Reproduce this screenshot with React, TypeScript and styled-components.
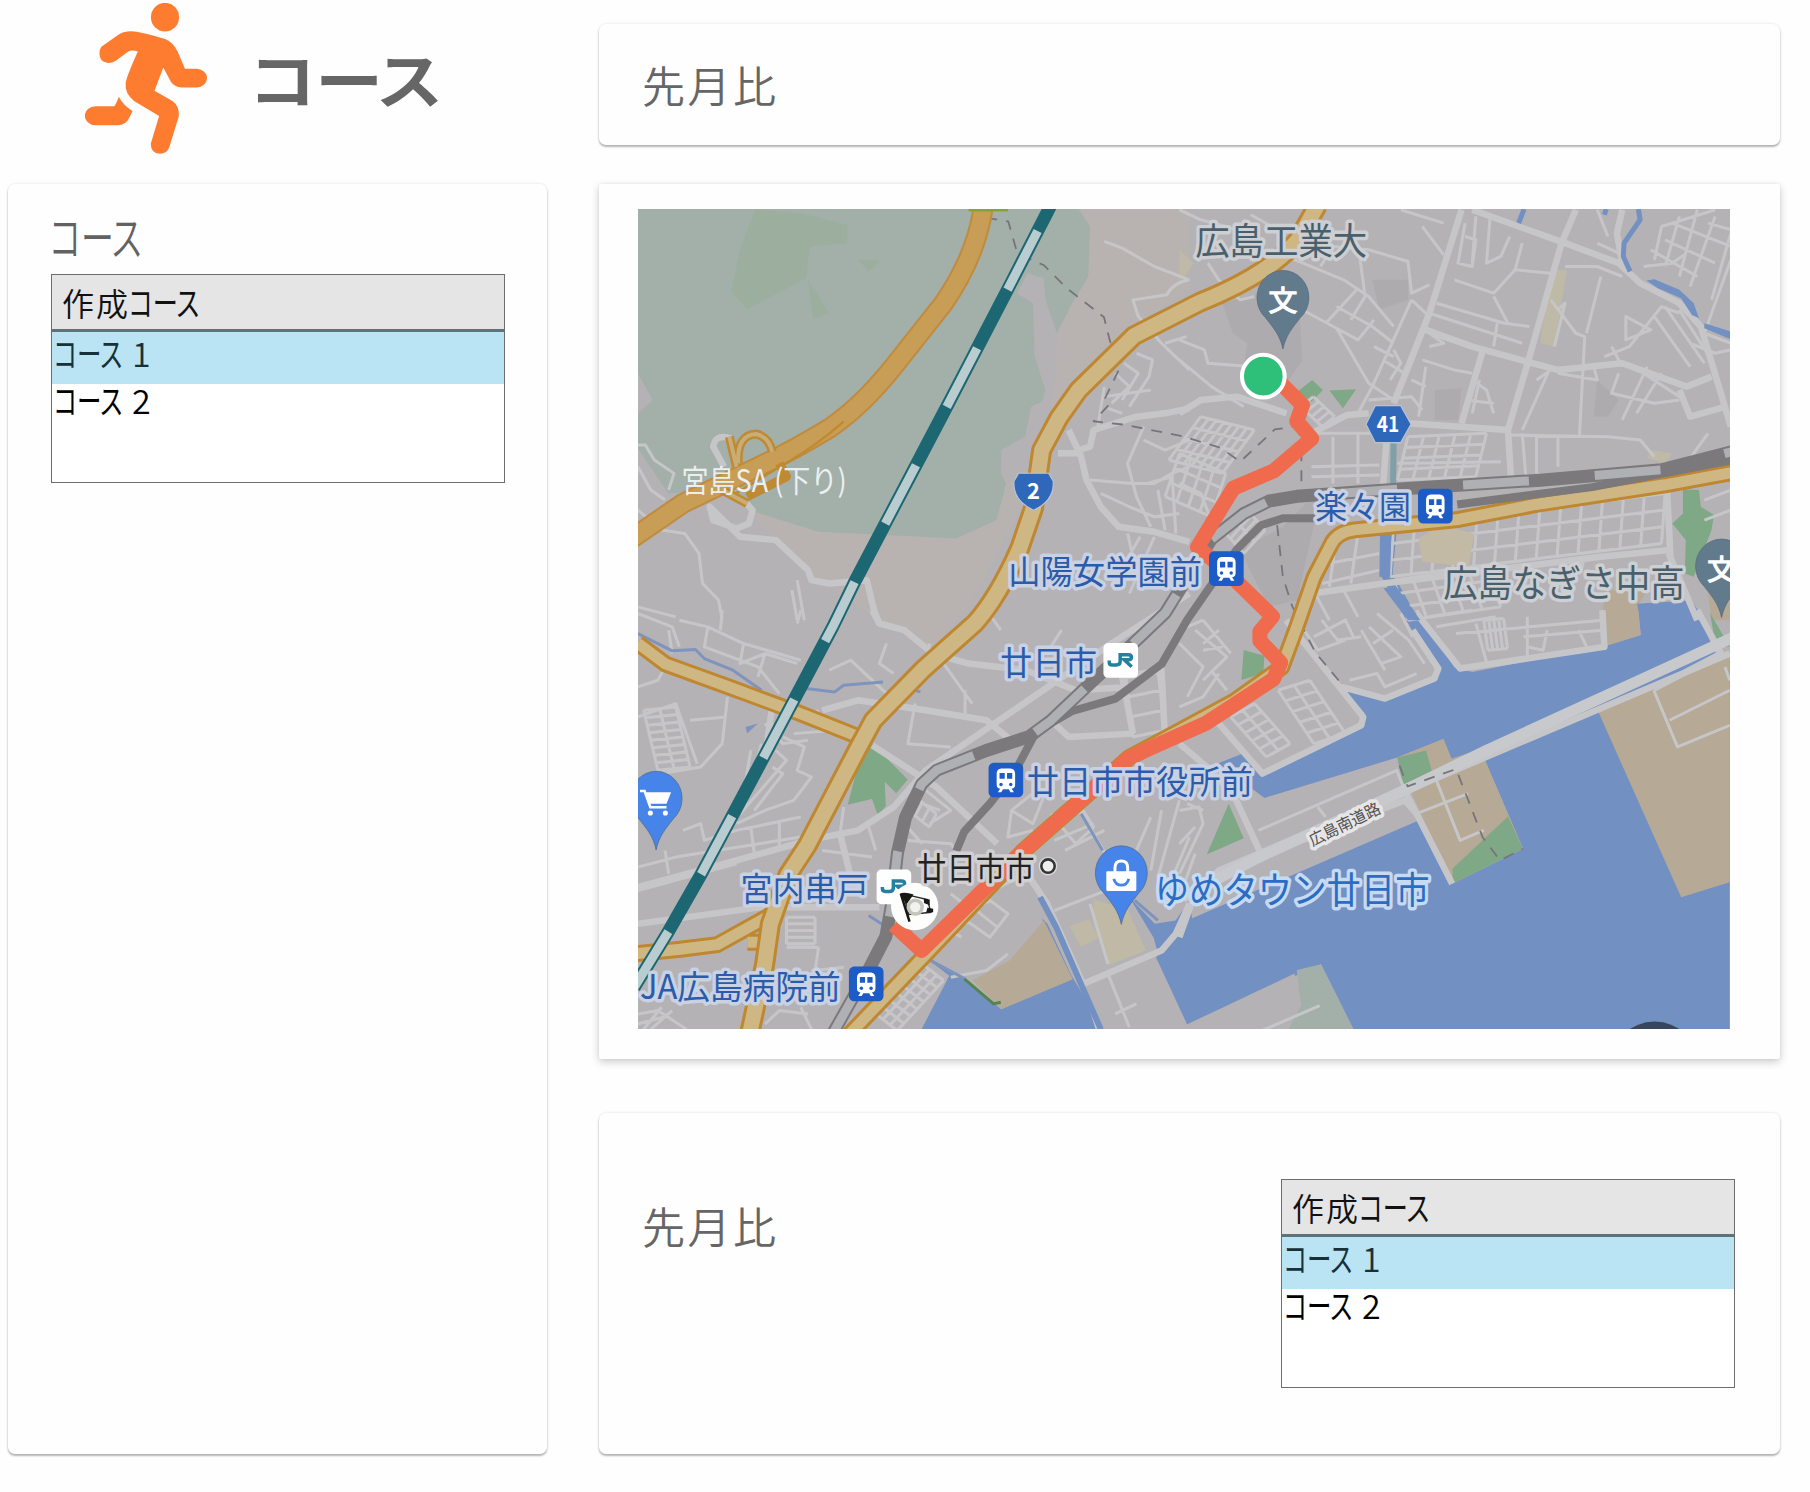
import React from "react";
import styled, { createGlobalStyle } from "styled-components";

const GlobalStyle = createGlobalStyle`
  *, *::before, *::after { box-sizing: border-box; }
  body {
    margin: 0;
    background: #fefefe;
    font-family: "Noto Sans CJK JP", "Noto Sans", sans-serif;
    font-weight: 350;
    color: #111;
  }
`;

/* ---------- page layout ---------- */

const Page = styled.main`
  display: grid;
  grid-template-columns: 539px 1181px;
  column-gap: 52px;
  width: 1810px;
  height: 1492px;
  padding: 0 0 38px 8px;
`;

const Column = styled.div`
  display: flex;
  flex-direction: column;
`;

const Brand = styled.header`
  display: flex;
  align-items: center;
  gap: 43px;
  height: 184px;
  padding: 0 0 28px 77px;
`;

const RunnerIcon = styled.svg`
  width: 122px;
  height: 151px;
  fill: #fd7c30;
`;

const Title = styled.h1`
  margin: 0 0 1px;
  font-size: 61px;
  font-weight: 700;
  line-height: 80px;
  color: #666;
`;

const Card = styled.section<{ $height: number; $top?: number; $lifted?: boolean }>`
  display: flex;
  align-items: center;
  justify-content: space-between;
  height: ${(p) => p.$height}px;
  margin-top: ${(p) => p.$top ?? 0}px;
  padding: 0 45px 0 43px;
  background: #fefefe;
  border-radius: ${(p) => (p.$lifted ? 2 : 7)}px;
  box-shadow: ${(p) =>
    p.$lifted
      ? "0 3px 9px rgba(0, 0, 0, 0.2), 0 0 3px rgba(0, 0, 0, 0.07)"
      : "0 2px 2px rgba(0, 0, 0, 0.27), 0 0 3px rgba(0, 0, 0, 0.12)"};
`;

const Sidebar = styled(Card)`
  flex-direction: column;
  align-items: flex-start;
  justify-content: flex-start;
  padding: 24px 43px;
`;

const Caption = styled.h2`
  margin: 0 0 0 -1px;
  height: 66px;
  font-size: 47px;
  font-weight: 350;
  line-height: 53px;
  color: #626262;
`;

const Metric = styled.p<{ $raise: number }>`
  margin: 0 0 ${(p) => p.$raise}px;
  font-size: 43px;
  line-height: 60px;
  letter-spacing: 2.5px;
  color: #666;
`;

const Kana = styled.span<{ $scale: number }>`
  display: inline-block;
  transform: scaleX(${(p) => p.$scale});
  transform-origin: left center;
  white-space: nowrap;
  font-feature-settings: "palt";
`;

/* ---------- list box ---------- */

const ListBox = styled.div`
  display: flex;
  flex-direction: column;
  flex: none;
  width: 454px;
  height: 209px;
  border: 1.5px solid #6d6d6d;
  background: #fff;
  font-size: 34px;
`;

const ListHead = styled.div`
  display: flex;
  height: 57px;
  padding-left: 10px;
  border-bottom: 3px solid #5f7278;
  background: #e5e5e5;
  line-height: 53px;
`;

const HeadKanji = styled.span`
  width: 67px;
  font-size: 32px;
  line-height: 55px;
  letter-spacing: 2px;
  white-space: nowrap;
`;

const ListRow = styled.div<{ $active?: boolean }>`
  display: flex;
  height: ${(p) => (p.$active ? 52 : 48)}px;
  padding-left: 2px;
  background: ${(p) => (p.$active ? "#bae4f3" : "transparent")};
  color: ${(p) => (p.$active ? "#17303a" : "#000")};
  line-height: ${(p) => (p.$active ? 42 : 32)}px;
`;

const KanaCell = styled.span`
  flex: none;
  width: 78px;
  font-weight: 400;
`;

const CourseList = () => (
  <ListBox>
    <ListHead>
      <HeadKanji>作成</HeadKanji>
      <KanaCell>
        <Kana $scale={0.74}>コース</Kana>
      </KanaCell>
    </ListHead>
    {[1, 2].map((n) => (
      <ListRow key={n} $active={n === 1}>
        <KanaCell>
          <Kana $scale={0.72}>コース</Kana>
        </KanaCell>
        {n}
      </ListRow>
    ))}
  </ListBox>
);

const Runner = () => (
  <RunnerIcon viewBox="221 9 321 452" preserveAspectRatio="none">
    <ellipse cx="431.500" cy="51.500" rx="37" ry="43" />
    <path d="M264 140L305 107Q322 92 350 94Q372 96 432 117Q453 127 465 155L484 206H514A28 28 0 0 1 514 262H475Q456 261 447 245L427 202L404 272L452 303Q470 318 468 347L443 440Q437 460 418 460Q394 458 394 430L416 347L350 302Q325 280 328 248Q330 230 360 154Q344 148 335 154L302 182Q292 190 279 188Q259 184 259 160Q259 148 264 140Z" />
    <path d="M310 290Q322 317 346 332L338 352Q328 375 308 375H249A28 28 0 0 1 249 318H298Q302 314 310 290Z" />
  </RunnerIcon>
);

/* ---------- map ---------- */

const MapCanvas = styled.svg`
  display: block;
  flex: none;
  width: 1092px;
  height: 820px;
  margin: -5px 0 0 -4px;
  font-family: "Noto Sans CJK JP", "Noto Sans", sans-serif;
  font-weight: 400;
`;

const Line = styled.path<{ $c: string; $w: number }>`
  fill: none;
  stroke: ${(p) => p.$c};
  stroke-width: ${(p) => p.$w}px;
  stroke-linejoin: round;
  vector-effect: non-scaling-stroke;
`;

const LAND = "#b5b2b6";
const WATER = "#7290c1";
const SAND = "#b6a995";
const PARK = "#7fa886";
const STREET = "#c6c6c9";

/* A block of streets: cols lines along v and rows lines along u. */
const blocks = (
  x: number, y: number,
  ux: number, uy: number,
  vx: number, vy: number,
  cols: number, rows: number
) => {
  let d = "";
  for (let i = 0; i <= cols; i++) {
    const t = i / cols;
    d += `M${x + ux * t} ${y + uy * t}l${vx} ${vy}`;
  }
  for (let j = 0; j <= rows; j++) {
    const t = j / rows;
    d += `M${x + vx * t} ${y + vy * t}l${ux} ${uy}`;
  }
  return d;
};

const NW = "matrix(.3094 0 0 .2888 545.8 173.3)";
const NE = "matrix(.3094 0 0 .2888 1022.3 173.3)";
const SW = "matrix(.3094 0 0 .2888 545.8 528.5)";
const SE = "matrix(.3425 0 0 .2888 1022.3 528.5)";

const JR_LINE =
  "M1502 391L1440 407L1335 416L1223 423L1124 430L1100 434L1078 445L1050 467L1010 531L988 552L948 589L911 624L892 638L855 650L812 667L799 679L785 708L778 739L773 783L768 811L753 840L722 895";
const SHINKANSEN = "M911 178L874 250L821 352L741 504L722 543L662 656L608 757L580 806L550 855";
const EXPRESSWAY = "M990 28Q970 170 880 310L740 500Q650 620 560 685Q460 750 390 785L150 910L0 1020";

const Streets = ({ sheet, wide, thin }: { sheet: string; wide: string; thin: string }) => (
  <g transform={sheet}>
    <Line $c={STREET} $w={3} d={thin} />
    <Line $c={STREET} $w={6.5} d={wide} />
  </g>
);

const Highway = ({ d, w = 12 }: { d: string; w?: number }) => (
  <>
    <Line $c="#be8730" $w={w} d={d} />
    <Line $c="#cfb784" $w={w - 6} d={d} />
  </>
);

const Place = ({
  x, y, w, size = 29, fill = "#2a5cab", halo = "#c9d1e2", children,
}: {
  x: number; y: number; w: number; size?: number; fill?: string; halo?: string; children: string;
}) => (
  <text
    x={x} y={y} fontSize={size} textLength={w} lengthAdjust="spacingAndGlyphs"
    fill={fill} stroke={halo} strokeWidth={6} strokeLinejoin="round" paintOrder="stroke"
  >
    {children}
  </text>
);

const Train = ({ x, y }: { x: number; y: number }) => (
  <g transform={`translate(${x} ${y})`}>
    <rect x="-15" y="-15" width="30" height="30" rx="4.500" fill="#1d5bc6" />
    <path fill="#fff" d="M-4-10H4Q8-9.500 8-5.500V4Q8 7 5 7.500L7 10.500H4L2.500 8H-2.500L-4 10.500H-7L-5 7.500Q-8 7-8 4V-5.500Q-8-9.500-4-10Z" />
    <path fill="#1d5bc6" d="M-5.500-6H-1V-1H-5.500ZM1-6H5.500V-1H1Z" />
    <circle cx="-4.200" cy="3.800" r="1.500" fill="#1d5bc6" />
    <circle cx="4.200" cy="3.800" r="1.500" fill="#1d5bc6" />
  </g>
);

const Jr = ({ x, y }: { x: number; y: number }) => (
  <g transform={`translate(${x} ${y})`}>
    <rect x="-15" y="-15" width="30" height="30" rx="4" fill="#fff" />
    <path
      d="M-10 0V1.500Q-10 4-7.500 4H-4Q-.5 4-.5 1V-5H6.500Q9.300-5 9.300-2.700Q9.300-.5 6.500-.5H3L9.500 5.500"
      fill="none" stroke="#23819f" strokeWidth="3"
    />
  </g>
);

const Pin = ({ x, y, fill, children }: { x: number; y: number; fill: string; children: React.ReactNode }) => (
  <g transform={`translate(${x} ${y})`}>
    <path
      d="M0 43C-2.500 31-8 25-15 16A22.500 23.500 0 1 1 15 16C8 25 2.500 31 0 43Z"
      fill={fill} stroke="#53677c" strokeWidth=".6"
    />
    {children}
  </g>
);

const CourseMap = () => (
  <MapCanvas viewBox="553.300 181.300 946 709.700" preserveAspectRatio="none">
    <rect x="550" y="180" width="955" height="715" fill={LAND} />

    {/* hills and woods */}
    <g transform={NW}>
      <path fill="#b8b3b0" d="M1200 28H1568V270L1380 400L1240 560L1190 700L1130 830L1080 960L960 1200L850 1350L700 1260L480 1100L330 930L1000 960L1160 560L1130 300Z" />
      <path fill={LAND} d="M1130 290L1090 270L1120 215L1165 240L1170 310L1200 400L1190 560L1150 800L1060 850L1030 800L1110 690L1165 580Z" />
      <path fill="#a2b0a9" d="M24 28H1258L1290 80L1285 230L1240 310L1197 400L1165 300L1160 235L1115 220L1085 280L1130 310L1135 470L1165 570L1155 605L1125 620L1108 710L1042 750L1040 820L1055 850L1028 960L915 1015L530 995L350 935L260 870L110 880L24 750Z" />
      <path fill={LAND} d="M24 520L65 600L24 640ZM24 745L120 900L24 980Z" />
      <path fill="#9caf9f" d="M352 28L480 40L610 75L610 130L505 140L495 235L330 328L285 275L310 150ZM500 240L560 340L515 358ZM640 180L705 182L670 215Z" />
    </g>
    <g transform={NE}>
      <path fill="#aeabae" d="M120 310L330 250L345 480L280 580L180 500L190 430L150 400ZM540 240L640 240L640 300L560 330ZM715 570L790 565L780 660H715ZM1170 540L1230 600L1200 650H1160ZM170 1050L290 980L400 860L330 1200L250 1220Z" />
      <path fill="#bfb9a8" d="M1040 210H1085L1050 440L1010 430ZM1320 750L1380 760L1360 790L1310 775ZM0 150L40 190L0 250Z" />
      <path fill={PARK} d="M330 575L372 540L402 570L370 605ZM420 572L495 568L458 625ZM1410 868L1455 870L1460 920L1497 945L1490 990L1440 1130L1415 1120L1418 1020L1380 970L1410 940Z" />
      <path fill={SAND} d="M1190 1170H1310L1285 1215V1260H1185ZM1480 1180L1544 1160V1260H1490Z" />
    </g>

    {/* sea */}
    <path fill={WATER} d="M1198 455H1211L1207 497L1226 530L1264 579L1276 582L1390 560L1422 550L1419 523L1466 520L1471 528L1486 565L1499 572V891H1173L1145 835L1029 887L1002 829L1029 797L1231 710L1259 765L1320 735L1283 649L1258 657L1251 640L1211 656L1096 691L1056 661L1079 652L1097 670L1180 630L1183 618L1164 596L1204 606L1243 588L1246 579L1224 546L1196 497Z" />
    <path fill={WATER} d="M806 832L823 845L799 891H956L929 845L908 800L903 795L925 848L868 874L835 846ZM979 777L1001 800L1019 797L1031 780L1034 800L1005 830L1000 812Z" />

    {/* reclaimed land */}
    <path fill={SAND} d="M1385 616L1499 567V764L1457 777ZM843 849L875 832L905 797L930 848L868 874ZM1390 528H1420L1422 550L1390 560ZM1211 656L1251 640L1258 657L1283 649L1320 735L1259 765L1225 690Z" />
    <path fill="#bfb9a6" d="M948 779L978 788L993 823L960 836L948 800ZM927 802L944 796L952 812L937 820Z" />
    <path fill="#a2b0a9" d="M1124 840L1145 835L1173 891H1117L1127 868Z" />
    <path fill={LAND} d="M1029 887L1122 843L1128 870L1117 891H1029Z" />
    <path fill={PARK} d="M1211 656L1236 650L1241 668L1216 680ZM1259 752L1307 707L1320 735L1259 765ZM1065 696L1078 726L1046 740ZM1078 563L1096 568L1095 583L1076 589ZM1482 531L1499 560L1487 560ZM756 644L787 675L777 687L767 677L768 698L761 706L756 692L735 697L742 670Z" />

    {/* local streets */}
    <Streets
      sheet={NW}
      thin="M1330 125L1380 145L1470 200L1568 240M1568 240Q1520 250 1505 285L1410 300L1425 350L1490 430L1568 510M1500 430L1560 410M1420 460L1465 480L1455 530L1400 620M1385 490L1425 520L1380 600M1360 520L1400 560L1350 610M1330 560L1310 690M1330 590L1460 570M1340 625L1380 640M1440 680L1395 790L1410 850L1470 850L1520 820L1568 800M1290 840L1410 850L1420 890L1460 980M1320 880L1400 920L1470 950L1540 940M1450 850L1520 830L1530 1000M1480 870L1500 990M1440 720L1500 750L1568 720M1395 1000L1410 1070L1490 1100M1430 1010L1350 1160M1470 1010L1400 1180M24 735H45L70 780L125 820L110 870M24 800L60 870L100 900M24 930L90 990L155 1000L195 1060L205 1150L250 1200L260 1260M24 1220L130 1250M470 1140L490 1260M455 1170L470 1260"
      wide="M285 715Q240 700 235 740L265 800M320 900L345 930L335 970L300 985L235 960L225 920L310 1010L410 1020L500 1110L510 1140L560 1150L665 1140L685 1230L700 1270M1568 625L1500 640L1420 650L1300 690L1290 740L1260 750M1230 690L1265 770L1280 840L1320 920L1370 980L1470 995L1568 1025M1200 760H1260"
    />
    <Streets
      sheet={NE}
      thin={
        "M0 30L60 60L200 100M200 45L250 75M80 190L110 240L170 300L210 290M300 170L460 240L530 290L600 380M530 150L640 185L650 280L700 255M310 310L440 385L530 550L600 600M440 385L500 420L545 360M410 370L500 265M440 320L540 380L600 430M480 360L520 290L505 170M395 200L430 140L530 150M620 30L740 70M680 80L740 165M700 340L960 430M720 310L910 370L980 380M770 240L880 280L940 210L1040 220M800 70L780 190L820 200L830 120L800 110M830 50L820 190M870 50L860 190L900 170L925 110M960 130L940 210M890 370L880 440M880 290L920 370M650 300L700 350M680 480L770 510L820 520M690 500L670 650M650 540L690 560M820 540L860 570L880 640M800 600L880 610M840 540L820 640M700 400L740 430L700 440M600 450L620 490L590 540M570 480L630 520M500 640L540 560L650 300M545 440L600 470M0 480L90 560L180 620M0 420L70 450L80 490L200 500M530 600L650 590L680 630M1080 200L1170 200L1240 230M1040 300L1110 400L1135 410L1120 710M1180 230L1140 400M1170 30L1200 110M1230 160L1170 130M1060 330L1080 310L1050 440M1310 500L1240 660M1270 500L1400 590M1230 520L1210 580L1330 610L1400 600M1350 520L1280 640M1210 440L1240 500M1190 470L1260 440L1350 320L1400 340M1250 350L1320 390L1250 420ZM1330 350L1430 500M1360 320L1470 490M1400 330L1490 480M1430 430L1500 460L1544 450M1544 430L1470 400L1544 180M1300 200L1380 190L1420 160M1330 180L1350 80L1500 30M1380 70L1544 140M1360 120L1500 190M1320 150L1450 230M1400 50L1360 200M1450 30L1400 230M1500 50L1430 260M1544 100L1490 300M1480 70L1544 90M1480 700L1420 790M1040 500L960 690M1000 540L1040 510M1060 520L1170 540L1160 500M920 705L1200 710L1290 720L1330 770M380 700L580 700M430 710V850M500 700V850M370 800L560 795M610 790L900 785M370 830L560 825M1060 710V800M960 700L970 830M1000 710V820M0 850L60 880L100 990M1470 900L1544 870M1470 960L1544 930M380 1180L420 1260M460 1170L500 1250M370 1100L560 1060M400 1150L560 1110M440 1010L420 1160M500 1000L480 1150" +
        blocks(640, 710, 220, -10, -30, 130, 5, 4) +
        blocks(600, 980, 760, -100, -10, 150, 13, 3) +
        blocks(600, 1140, 260, -40, 40, 120, 5, 3) +
        blocks(60, 650, 150, 40, -90, 130, 7, 4) +
        blocks(375, 590, 60, 60, -35, 30, 4, 1) +
        blocks(0, 760, 130, 60, -40, 130, 4, 3) +
        blocks(190, 930, 50, 60, -60, 70, 4, 2)
      }
      wide="M790 30L700 340L600 610M1110 30L1070 130L975 490L920 690L930 860M820 30L1080 130L1230 190L1290 250L1400 310L1460 380L1544 680M690 390L820 440L990 490L1060 510L1240 490L1420 560L1490 530M1240 30L1225 100L1240 190M850 450L790 670M640 670L920 690M0 640L60 600L160 590L300 640M370 700L470 645L530 640M580 720L570 860M1365 860L1375 1070M370 1180L570 1150L1180 1070L1370 1050M1400 570L1430 650L1530 620M1370 1060L1450 1260M1130 1070L1120 1110"
    />
    <path transform={NE} fill="#c3baa6" d="M670 1015L730 975L825 1000L810 1100L680 1085Z" />
    <Streets
      sheet={SW}
      thin={
        "M24 10L120 50L140 110M110 60L120 130M140 30L220 50L320 100L310 160L380 130L470 160M220 50L210 110L360 170L420 250M260 0L255 60M320 100L480 150M480 0L470 40M380 130L360 200M24 230L80 210L100 170M275 260L260 400L200 470L30 500M270 320L170 330M24 320L130 280L190 460M720 100L700 160L740 190M840 100L830 200M860 130L960 280M1000 0L1040 60M1210 60L1180 110M560 180L620 150L720 250M800 280L780 400L900 410M940 240V310M500 320L530 300M430 380L490 410L470 480L510 500L460 570L380 600L300 640M410 420L440 450L310 610M400 470L430 490L350 600M460 370L580 360M380 340L430 400L500 390M24 770L130 740L480 680M150 660L200 640L210 690L300 660L480 620M24 840L300 760M340 650L350 730M100 720L110 790M420 630V710M600 590L590 670L620 800M540 720L680 740M670 650L690 720M770 640L820 700M780 690L900 700L920 730M830 540L900 600L840 640M870 600L820 580M1070 600L1130 640L1160 560M1140 540L1070 600L1060 680L1130 660M1180 610L1250 700L1300 650L1270 600L1180 640M1190 690L1300 640M1220 720L1330 660M1260 600L1350 760M1460 620L1420 720L1430 780M1490 600L1460 780M1540 570L1480 800M1568 680L1490 880M900 850L960 900L1010 870L1060 910L1010 980L930 920M960 890L1030 950M1000 850L1110 790M980 880L940 940M880 950L930 980M1190 900L1360 830M24 1210L80 1200L160 1256M90 1190L40 1256M120 1200L60 1256M24 1240L110 1215M470 1140L510 1100M530 1010L520 1080L600 1070M440 1010H530M480 1190L510 1256M380 1240L420 1200L500 1210M1060 1030L1000 1080L900 1100M1340 1090L1400 1250M1270 1120L1310 1256M1360 1210L1420 1180M1290 880L1340 1060M340 420L310 610M370 400L320 600" +
        blocks(40, 300, 90, -10, 40, 180, 2, 8) +
        blocks(820, 1060, 60, 50, -130, 150, 3, 7) +
        blocks(800, 560, 60, 50, -20, 40, 3, 1) +
        blocks(440, 920, 80, 0, 0, 80, 1, 4) +
        blocks(1390, 200, 90, -20, 20, 180, 1, 3)
      }
      wide="M680 0L700 40L770 60L850 130L950 160L1110 180L1250 240L1400 230M540 300L640 270L830 300L1000 330L1080 400M1568 -50L1350 100L830 480L740 590L640 660L500 690L300 750L24 830M680 405L860 530L1030 700M1410 370L1380 200L1490 180L1500 390M1190 340L1230 380L1410 370M1120 800L1170 880L1270 1120L1490 1020L1530 970L1568 880M24 940L370 890L700 890M590 670L620 800M400 290L380 440"
    />
    <Streets
      sheet={SE}
      thin={
        "M0 60L60 30M0 100L60 170L20 260M40 60L120 140L60 210M60 30L130 130M100 60L60 100M0 290L60 260L100 190M80 180L120 240M60 120L110 110M340 80L420 30L440 80M360 30L400 90L460 80M310 50L350 120L420 90M460 60L520 180M480 50L560 140L510 160M490 100L540 60M500 10L580 90L620 160M560 10L590 80M430 210L500 190L520 230L600 190M600 0L700 170M630 20L740 0M650 50L800 20M700 70L1070 30M750 40L780 170M880 20V140M930 60L920 120L880 110M870 80L1070 60M1010 60L1030 110M200 660L550 480L570 540M350 590L370 620M600 610L730 550M650 510L710 690L770 660M1200 240L1260 410L1392 345M1240 330L1392 240M1380 170L1392 210M0 600L50 590L60 640L0 790M20 580L60 600M0 700L40 650M170 1280L355 1185M0 860L40 730" +
        blocks(130, 320, 60, -40, 90, 120, 2, 5) +
        blocks(250, 240, 80, -30, 90, 160, 2, 5) +
        blocks(770, 30, 50, -5, 10, 90, 4, 1)
      }
      wide="M0 400L80 480L140 560L210 740M100 340L210 490L460 345L465 320L270 30M100 340L60 310M410 230L520 265L645 205L655 175L590 60M600 10L710 175L1075 110L1070 0M0 980L30 880L100 780L200 730L1392 130M1310 0L1370 130L1200 235M200 740L570 570L600 610M570 540L690 820"
    />
    <Line $c="#c7c9cc" $w={11} d="M1025 777L1090 743L1220 683L1290 649L1430 585L1502 552" />

    {/* rivers */}
    <g transform={NE}>
      <Line $c={WATER} $w={5} d="M1285 28L1290 60L1245 130L1243 170L1262 215M965 28L950 70M1195 28L1190 45" />
      <path fill={WATER} d="M1308 242L1330 238L1400 270L1440 310L1455 355L1435 345L1405 295L1340 265ZM1470 370L1544 395V418L1470 385Z" />
      <path fill={WATER} d="M562 985H594L590 1130H560ZM572 1165L605 1155L675 1260H640Z" />
      <Line $c="#7f9fa9" $w={6} d="M600 730L598 870" />
    </g>
    <g transform={SW}>
      <Line $c="#7e94bd" $w={3} d="M24 70L120 122L185 118L210 145L290 180L370 240M495 235L575 245L600 225L710 215M780 235L815 245M670 915L735 960M840 1048L940 1105M1265 610L1325 720M1415 870L1480 930" />
      <path fill="#7e94bd" d="M325 350L360 340L330 370Z" />
      <Line $c={WATER} $w={6} d="M1150 860L1195 950L1320 1256" />
      <Line $c="#52854f" $w={3} d="M938 1105L1020 1180L1040 1175" />
    </g>

    {/* footpaths */}
    <Line
      $c="#77757a" $w={1.8} strokeDasharray="11 9"
      d="M855 189L874 192L882 220L905 230L925 250L957 275L962 295L970 320L958 345L962 350L948 365L975 368L1025 378L1058 388L1075 400L1105 372L1120 370M1128 390V425M1107 455L1112 500L1120 525L1140 565L1165 595M1213 663L1220 681L1262 666L1285 725L1300 745L1320 735"
    />

    {/* expressway and service area */}
    <g transform={NW}>
      <Line $c="#c08b3d" $w={21} d={EXPRESSWAY} />
      <Line $c="#c89d55" $w={17} d={EXPRESSWAY} />
      <Line $c="#bf8a33" $w={2.5} d="M600 665Q520 740 430 795L290 885" />
      <Line $c="#bf8a33" $w={9} d="M305 790Q300 705 355 702Q390 710 400 755M280 710L300 800M260 870L330 910M420 790L440 830L330 890" />
      <Line $c="#c9ad76" $w={4} d="M305 790Q300 705 355 702Q390 710 400 755M280 710L300 800M260 870L330 910" />
      <Line $c="#85a33d" $w={3} d="M950 31H1060" />
    </g>

    {/* national roads */}
    <Highway w={17} d="M553 557L577 575L632 595L694 618L744 638" />
    <Highway w={17} d="M550 826L590 822L622 818L667 793M648 816H668" />
    <Line $c="#bf8a33" $w={6} d="M741 640L697 730" />
    <Highway w={21} d="M1142 178L1125 208Q1100 238 1040 262L983 291L935 338L918 362L903 390L896 440L884 475Q865 518 845 540L800 580L757 624L744 648L700 732L683 758L668 800L663 835L650 895" />
    <Highway w={17} d="M1503 409L1443 420L1331 437L1264 450L1174 459Q1158 461 1153 473L1139 500L1124 543L1111 578L1070 607L1022 633L979 656L886 738L803 826L736 896" />

    {/* railways */}
    <Line $c="#7b797c" $w={8} d="M1500 399L1380 422L1263 437M1140 449H1112L1093 455L1072 476L1047 511L1029 537L1007 575L967 605L929 616L898 634L880 668L858 696L836 720L829 737" />
    <Line $c="#7b797c" $w={13} d={JR_LINE} />
    <Line $c="#aeb0b3" $w={9} strokeDasharray="66 66" strokeDashoffset="57" d={JR_LINE} />
    <Line $c="#1c6772" $w={13} d={SHINKANSEN} />
    <Line $c="#b9cdd1" $w={9} strokeDasharray="66 66" strokeDashoffset="-29" d={SHINKANSEN} />

    {/* the running course */}
    <Line $c="#f06b4e" $w={15} d="M1108 330L1129 351L1124 365L1137 380L1104 408L1069 423L1038 474L1060 492L1103 534L1092 547V555L1110 574L1104 588L1046 626L979 656L886 738L799 823L775 801" />

    <Place x={1036} y={221} w={149} size={32} fill="#4a5f6c" halo="#cdcfd2">広島工業大</Place>
    <Place x={591} y={426} w={143} size={27} fill="#eceff0" halo="transparent">宮島SA (下り)</Place>
    <Place x={1140} y={450} w={83} size={29}>楽々園</Place>
    <Place x={874} y={506} w={168} size={29}>山陽女学園前</Place>
    <Place x={1251} y={517} w={209} size={32} fill="#4a5f6c" halo="#cdcfd2">広島なぎさ中高</Place>
    <Place x={867} y={585} w={84} size={29}>廿日市</Place>
    <Place x={890} y={688} w={196} size={29}>廿日市市役所前</Place>
    <Place x={642} y={780} w={111} size={29}>宮内串戸</Place>
    <Place x={555} y={865} w={174} size={29}>JA広島病院前</Place>
    <Place x={1001} y={783} w={238} size={32} fill="#2b6cc4" halo="#c6daf2">ゆめタウン廿日市</Place>
    <g transform="rotate(-26 1165 714)">
      <Place x={1132} y={719} w={67} size={14} fill="#505050" halo="#e6e6e8">広島南道路</Place>
    </g>

    <Train x={1244} y={438.5} />
    <Train x={1063} y={492.5} />
    <Train x={872} y={675.5} />
    <Train x={751} y={852} />
    <Jr x={971.5} y={572} />
    <Jr x={775} y={768} />

    <g fill="#fff" fontWeight="700" textAnchor="middle">
      <path fill="#2f68bb" stroke="#b9c3d5" strokeWidth="1" d="M883 410H909L913 417Q914 434 896 442Q878 434 879 417Z" />
      <text x="896" y="432" fontSize="19">2</text>
      <path fill="#2f68bb" stroke="#b9c3d5" strokeWidth="1" d="M1192 351.500H1214L1223 367.500L1214 383.500H1192L1184 367.500Z" />
      <text x="1203" y="374" fontSize="18.500" textLength="19.500" lengthAdjust="spacingAndGlyphs">41</text>
    </g>

    <Pin x={1112} y={259.5} fill="#627b8c">
      <text x="0" y="10" textAnchor="middle" fontSize="25" fill="#fff" stroke="#fff" strokeWidth="1">文</text>
    </Pin>
    <Pin x={1492} y={492} fill="#627b8c">
      <text x="0" y="10" textAnchor="middle" fontSize="25" fill="#fff" stroke="#fff" strokeWidth="1">文</text>
    </Pin>
    <Pin x={569} y={693} fill="#4684ea">
      <path d="M-14-8H-10L-5 6H9" fill="none" stroke="#fff" strokeWidth="2.200" />
      <path d="M-9-7H13L9 3H-6Z" fill="#fff" />
      <circle cx="-5" cy="11" r="2.200" fill="#fff" />
      <circle cx="8" cy="11" r="2.200" fill="#fff" />
    </Pin>
    <Pin x={972} y={757.5} fill="#4684ea">
      <rect x="-13" y="-3" width="26" height="17" rx="1" fill="#fff" />
      <path d="M-5.500-2V-6Q-5.500-12 0-12Q5.500-12 5.500-6V-2" fill="none" stroke="#fff" strokeWidth="2.600" />
      <path d="M-6.500 3.500Q-5 9 0 9Q5 9 6.500 3.500" fill="none" stroke="#4684ea" strokeWidth="2.400" />
    </Pin>

    {/* start and goal */}
    <circle cx="1095" cy="326" r="18.500" fill="#2ebf79" stroke="#fff" strokeWidth="3.500" />
    <circle cx="793" cy="785" r="20.500" fill="#fdfdfc" />
    <path d="M783 774L804 779L807 790L788 792Z" fill="none" stroke="#262626" strokeWidth="1.200" />
    <path d="M780 774Q784 772 792 774.500L786 783Z" fill="#161616" />
    <path d="M781 774L788.500 798" stroke="#161616" strokeWidth="2.200" />
    <path d="M801 778L806 779V784L801 782ZM804 786L809 787V790H803Z" fill="#161616" />
    <circle cx="793.500" cy="785.500" r="6" fill="#f2f2f0" stroke="#c3c4bd" strokeWidth="3" />

    <Place x={795} y={762} w={102} size={28} fill="#222" halo="#d0cfd1">廿日市市</Place>
    <circle cx="908.500" cy="750" r="5.800" fill="#eee" stroke="#d9d9d9" strokeWidth="4.500" />
    <circle cx="908.500" cy="750" r="5.800" fill="#eee" stroke="#333" strokeWidth="2.200" />

    <circle cx="1434" cy="923" r="38.500" fill="#38465d" />
  </MapCanvas>
);

export default function App() {
  return (
    <>
      <GlobalStyle />
      <Page>
        <Column>
          <Brand>
            <Runner />
            <Title>
              <Kana $scale={1.11}>コース</Kana>
            </Title>
          </Brand>
          <Sidebar as="aside" $height={1270}>
            <Caption>
              <Kana $scale={0.7}>コース</Kana>
            </Caption>
            <CourseList />
          </Sidebar>
        </Column>
        <Column>
          <Card $height={121} $top={24}>
            <Metric $raise={2}>先月比</Metric>
          </Card>
          <Card $height={875} $top={39} $lifted>
            <CourseMap />
          </Card>
          <Card $height={341} $top={54}>
            <Metric $raise={118}>先月比</Metric>
            <CourseList />
          </Card>
        </Column>
      </Page>
    </>
  );
}
